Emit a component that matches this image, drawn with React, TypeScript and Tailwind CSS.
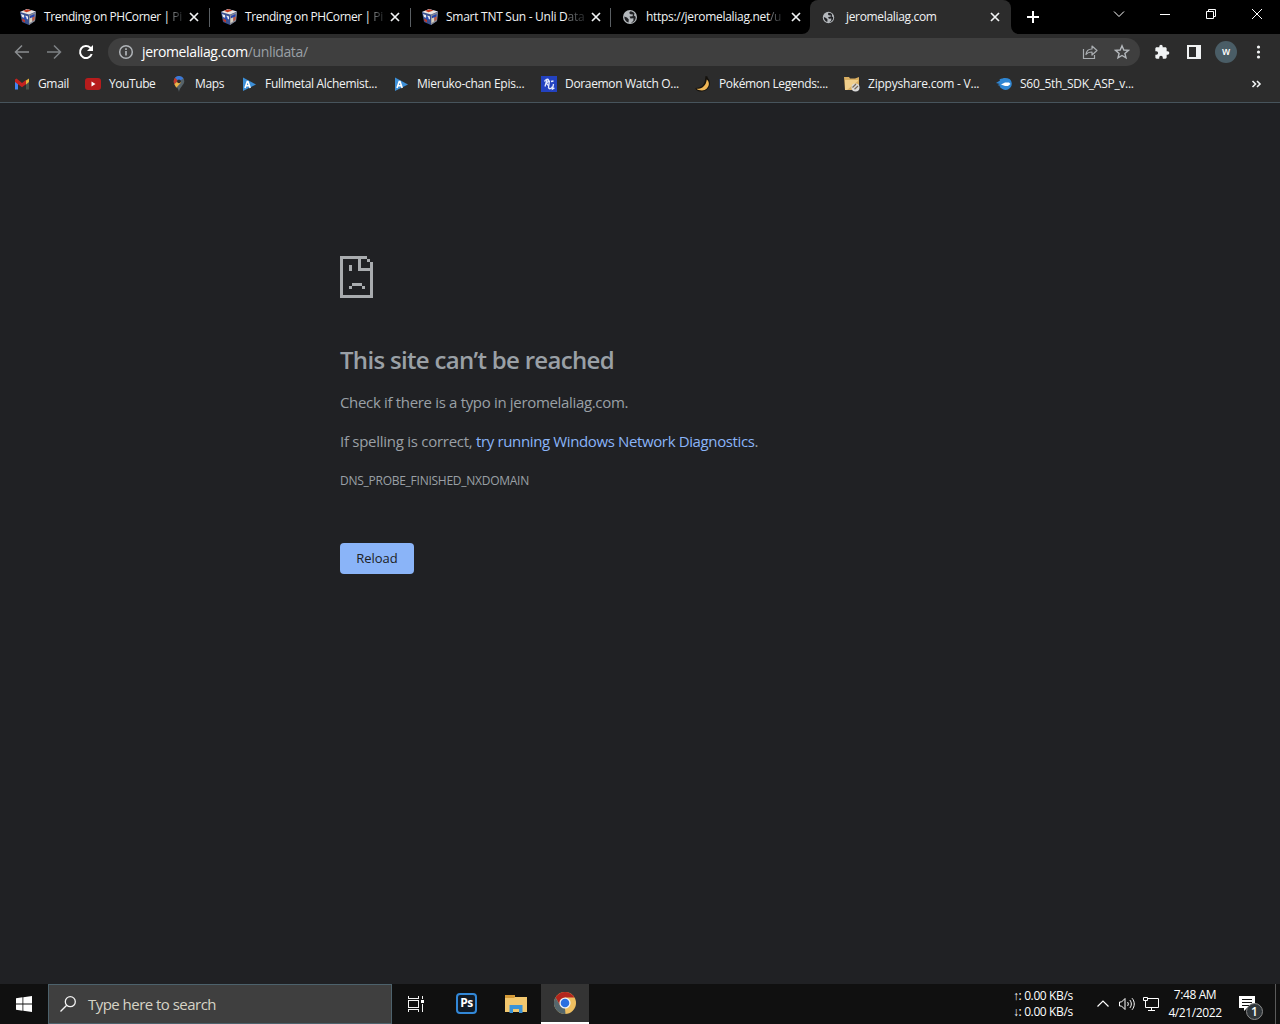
import type { ReactNode } from "react";

const uiFont = "font-['Open_Sans','Noto_Sans',sans-serif]";

function CubeIcon() {
  return (
    <svg className="w-4 h-4 shrink-0" viewBox="0 0 16 16">
      <path d="M0 3 7 0 16 2.500 15 12 9 16 2 13Z" fill="#39508f" />
      <path d="M9 6 16 3 15 12 9 16Z" fill="#8a8b93" />
      <path d="M0 3 7 0 16 2.500 9 5.500Z" fill="#ece6e2" />
      <path d="M3 1.800 7.500 .2 11.500 1.500 6.500 3.300Z" fill="#c43a22" />
      <path d="M1 5 4 6 4.500 9 2 8ZM5.500 6.500 8 7.500 8 10.500 6 9.500Z" fill="#e9eaf2" />
      <path d="M2 9.500 5 11 5 13.500 2.500 12Z" fill="#c0392b" />
      <path d="M4 7.500 6.500 8.500 6.500 11 4.500 10Z" fill="#2347c0" />
      <path d="M10 7 14.500 5 14.500 7.500 10 9.500Z" fill="#2745b0" />
      <path d="M9.500 9.500 12 8.500 12 12.500 9.500 14Z" fill="#d8d2c4" />
      <path d="M12.500 8.500 14.800 7.500 14.300 11 12.500 12Z" fill="#c4513a" />
    </svg>
  );
}

function GlobeIcon({ className }: { className: string }) {
  return (
    <svg className={className} viewBox="0 0 16 16">
      <circle cx="8" cy="8" r="7" fill="#b4b8bc" />
      <path
        d="M8.500 2.300C7 3 7 4.500 8.300 5.300L11 5.500 10.500 7.200 7.500 7.500 8.500 9.500 11.500 9.300 11.300 12 9 13.700 10.500 13.500C12.800 12.500 13.900 10.300 13.700 7.800L12 6.500 12.500 4.500C11.500 3.200 10.200 2.500 8.500 2.300ZM2.300 7.500 5 8.500 6.800 10.500 6.500 13.500C3.800 12.800 2.200 10.300 2.300 7.500Z"
        fill="#202124"
      />
    </svg>
  );
}

function CloseIcon() {
  return (
    <svg className="w-4 h-4" viewBox="0 0 16 16" stroke="#f1f3f4" strokeWidth="1.700">
      <path d="m4 4 8 8M12 4l-8 8" />
    </svg>
  );
}

interface TabProps {
  title: string;
  rest?: string;
  icon: ReactNode;
  active?: boolean;
  divider?: boolean;
  size?: string;
}

function Tab({ title, rest, icon, active, divider, size = "w-[200px] tracking-[-0.27px]" }: TabProps) {
  return (
    <div
      className={`relative flex items-center h-[34px] shrink-0 ${size} ${
        active ? "bg-[#2c2c2c] rounded-t-lg pl-3" : "pl-[11px]"
      }`}
    >
      {icon}
      <div className="ml-2 w-[137px] shrink-0 whitespace-nowrap text-xs text-[#f1f3f4]">
        {title}
        {rest && (
          <span className="bg-gradient-to-r from-[#85888a] to-[#2c2e30] bg-clip-text text-transparent">{rest}</span>
        )}
      </div>
      <div className={active ? "ml-[4px]" : "ml-[5px]"}>
        <CloseIcon />
      </div>
      {divider && <div className="absolute right-0 top-2 h-[19px] w-px bg-[#5a5f63]" />}
      {active && (
        <>
          <svg className="absolute -left-2 bottom-0 w-2 h-2" viewBox="0 0 8 8">
            <path d="M8 0V8H0A8 8 0 0 0 8 0Z" fill="#2c2c2c" />
          </svg>
          <svg className="absolute -right-2 bottom-0 w-2 h-2" viewBox="0 0 8 8">
            <path d="M0 0V8H8A8 8 0 0 1 0 0Z" fill="#2c2c2c" />
          </svg>
        </>
      )}
    </div>
  );
}

function TabStrip() {
  return (
    <div className="flex h-[34px] bg-black pl-[9px]">
      <Tab divider size="w-[201px] tracking-[-0.43px]" title="Trending on PHCorner | " rest="Pi" icon={<CubeIcon />} />
      <Tab divider size="w-[201px] tracking-[-0.43px]" title="Trending on PHCorner | " rest="Pi" icon={<CubeIcon />} />
      <Tab divider title="Smart TNT Sun - Unli D" rest="ata" icon={<CubeIcon />} />
      <Tab
        size="w-[199px] tracking-[-0.3px]"
        title="https://jeromelaliag.net"
        rest="/u"
        icon={<GlobeIcon className="w-4 h-4 shrink-0" />}
      />
      <Tab
        active
        size="w-[201px] tracking-[-0.33px]"
        title="jeromelaliag.com"
        icon={<GlobeIcon className="w-[13px] h-[13px] mr-[3px] shrink-0" />}
      />
      <div className="flex items-center pl-[14px]">
        <svg className="w-4 h-4" viewBox="0 0 16 16" stroke="#fff" strokeWidth="2">
          <path d="M2 8h12M8 2v12" />
        </svg>
      </div>
      <div className="ml-auto flex h-7 text-white">
        {[
          <path d="m3 5.500 5 5 5-5" />,
          <path d="M3 8.500h10" />,
          <path d="M3.500 5.500h7v7h-7zM5.500 5.500v-2h7v7h-2" />,
          <path d="m3 3 10 10M13 3 3 13" />,
        ].map((shape, i) => (
          <div key={i} className="flex w-[46px] items-center justify-center">
            <svg className="w-4 h-4" viewBox="0 0 16 16" fill="none" stroke="currentColor">
              {shape}
            </svg>
          </div>
        ))}
      </div>
    </div>
  );
}

function Toolbar() {
  return (
    <div className="flex h-9 items-center bg-[#2c2c2c] pl-[14px] pr-[14px]">
      <div className="flex gap-4 w-[94px] shrink-0">
        <svg className="w-4 h-4" viewBox="0 0 16 16" fill="none" stroke="#8a8d90" strokeWidth="1.500">
          <path d="M15 8H2M8 1.500 1.500 8 8 14.500" />
        </svg>
        <svg className="w-4 h-4" viewBox="0 0 16 16" fill="none" stroke="#7d8184" strokeWidth="1.500">
          <path d="M1 8h13M8 1.500 14.500 8 8 14.500" />
        </svg>
        <svg className="w-4 h-4" viewBox="0 0 16 16" fill="none" stroke="#fff" strokeWidth="2">
          <path d="M13.700 10A6 6 0 1 1 12.300 3.800L14 5.500" />
          <path d="M15 1v6H9Z" fill="#fff" stroke="none" />
        </svg>
      </div>
      <div className="flex h-7 flex-1 items-center rounded-full bg-[#3f3f3f] pl-[10px] pr-[10px]">
        <svg className="w-4 h-4" viewBox="0 0 16 16" fill="none" stroke="#b0b4b8" strokeWidth="1.500">
          <circle cx="8" cy="8" r="6.300" />
          <path d="M8 7v4.500M8 4.300v1.600" strokeWidth="1.700" />
        </svg>
        <div className="ml-2 text-sm tracking-[-0.38px] text-white">
          jeromelaliag.com<span className="text-[#9aa0a6]">/unlidata/</span>
        </div>
        <div className="ml-auto flex gap-4">
          <svg className="w-4 h-4" viewBox="0 0 16 16" fill="none" stroke="#a9adb1" strokeWidth="1.200">
            <path d="M1.500 5v9.500h11V11" />
            <path d="M4 10.500C4.300 7 6.500 5 10 5V2l5 4.500-5 4.500V8C7.300 8 5.500 8.500 4 10.500Z" strokeLinejoin="round" />
          </svg>
          <svg className="w-4 h-4" viewBox="0 0 16 16" fill="none" stroke="#b4b8bc" strokeWidth="1.400">
            <path d="m8 1.800 1.800 4.200 4.600.4-3.500 3 1.100 4.500L8 11.500l-4 2.400 1.100-4.500-3.500-3L6.200 6Z" />
          </svg>
        </div>
      </div>
      <div className="ml-[14px] flex items-center text-[#f1f3f4]">
        <svg className="w-4 h-4" viewBox="0 0 24 24" fill="currentColor">
          <path d="M20.500 11H19V7c0-1.100-.9-2-2-2h-4V3.500a2.500 2.500 0 0 0-5 0V5H4c-1.100 0-2 .9-2 2v3.800h1.500a2.700 2.700 0 0 1 0 5.400H2V20c0 1.100.9 2 2 2h3.800v-1.500a2.700 2.700 0 0 1 5.400 0V22H17c1.100 0 2-.9 2-2v-4h1.500a2.500 2.500 0 0 0 0-5Z" />
        </svg>
        <svg className="ml-4 w-4 h-4" viewBox="0 0 16 16" fill="none" stroke="currentColor" strokeWidth="2">
          <path d="M2 2h12v12H2z" />
          <path d="M10 2h4v12h-4z" fill="currentColor" stroke="none" />
        </svg>
        <div className="ml-[13px] flex h-[22px] w-[22px] items-center justify-center rounded-full bg-[#4a5d66] pb-px text-[10px] font-semibold text-white">
          w
        </div>
        <svg className="ml-[13px] w-4 h-4" viewBox="0 0 16 16" fill="currentColor">
          <circle cx="8.500" cy="3" r="1.600" />
          <circle cx="8.500" cy="8" r="1.600" />
          <circle cx="8.500" cy="13" r="1.600" />
        </svg>
      </div>
    </div>
  );
}

const gmail = (
  <>
    <path d="M1 4v9.500h3V7Z" fill="#4285f4" />
    <path d="M15 4v9.500h-3V7Z" fill="#48524a" />
    <path d="M12 4.500 15 2.500V6l-3 2.500Z" fill="#e8b53c" />
    <path d="M1 3.500 2.500 2.500 8 7l4-3v4.300L8 11.300 1 6Z" fill="#c5221f" />
  </>
);

const youtube = (
  <>
    <rect x="0" y="2" width="16" height="12" rx="3" fill="#b71c1c" />
    <path d="m6.500 5.500 4 2.500-4 2.500Z" fill="#fff" />
  </>
);

const maps = (
  <>
    <path d="M8 0a5.300 5.300 0 0 1 5.300 5.300C13.300 9 9 10.500 8 16 7 10.500 2.700 9 2.700 5.300A5.300 5.300 0 0 1 8 0Z" fill="#56636a" />
    <path d="M4 1.800A5.300 5.300 0 0 1 12.500 2.500L6.300 6.200Z" fill="#3b78d8" />
    <path d="M4 1.800 7 4.500 3.300 8.200C2.400 6.300 2.400 3.500 4 1.800Z" fill="#c5392b" />
    <path d="M3.300 8.200 8 4l2 2.500-4.700 5.300Z" fill="#edb548" />
    <circle cx="8" cy="5.300" r="1.900" fill="#2c2c2c" />
  </>
);

const anime = (
  <>
    <path d="M2 1.500 15 8.500 2 15Z" fill="#3c8fd8" />
    <path d="m4 12 2.200-6.500h.8L9.200 12M5 9.800h3.500" fill="none" stroke="#fff" strokeWidth="1.600" />
  </>
);

const runic = (
  <>
    <path d="M0 0h16v16H0z" fill="#2342c0" />
    <path
      d="M3.500 5.500C4.500 3 7 2.500 7.500 4S6 7 4.500 7.200M6 3.500 4 10.500M5.500 7.200 7 9.500M8.500 4.500 7.500 11.500C8 13.500 10.500 13 11.500 10.500M10 5.500l2.500-.5M12.500 8l-1 5 2-1"
      fill="none"
      stroke="#e6ecff"
      strokeWidth="1.300"
    />
  </>
);

const banana = (
  <>
    <path d="M10.500 0 12.500 .5 12.800 2C17.500 7 14 15.500 6 15.500 3 15.500.5 14 .5 12 6 12 9.500 9 10 4Z" fill="#15120d" />
    <path d="M11.800 3.500C16.500 7.500 12.500 14.500 7 14.500 4.500 14.500 2.500 14 1.500 12.800 7.500 13 11 9.500 11.800 3.500Z" fill="#efb656" />
  </>
);

const zippy = (
  <>
    <path d="M0 1h5l1 1.500h5L15 1v13H1Z" fill="#d9ae61" />
    <path d="M1 4h13v1L3 14H1Z" fill="#f0cf8c" />
    <circle cx="11.500" cy="11.500" r="4" fill="#dadada" />
    <path d="m8.500 11.500 3.500-3.500M10.500 13.300 14 10" stroke="#7a6a55" strokeWidth="1.200" />
  </>
);

const comet = (
  <>
    <path d="M0 7 4 4.500 3.500 3.500C7 1.500 11 1.500 13.500 3 17 6 16.500 11.500 12 13.500 9 14.500 6 13.500 3.500 10.800L4.500 10 1.500 9 4 8Z" fill="#2f86d3" />
    <path d="M5 8.500 9 6.500h4l1.500 1.500L12 10H9Z" fill="#fff" />
  </>
);

const bookmarks = [
  { label: "Gmail", icon: gmail, size: "w-[71px] tracking-[-0.35px]" },
  { label: "YouTube", icon: youtube, size: "w-[86px] tracking-[-0.42px]" },
  { label: "Maps", icon: maps, size: "w-[70px] tracking-[-0.35px]" },
  { label: "Fullmetal Alchemist...", icon: anime, size: "w-[152px] tracking-[-0.3px]" },
  { label: "Mieruko-chan Epis...", icon: anime, size: "w-[148px] tracking-[-0.27px]" },
  { label: "Doraemon Watch O...", icon: runic, size: "w-[154px] tracking-[-0.33px]" },
  { label: "Pokémon Legends:...", icon: banana, size: "w-[149px] tracking-[-0.36px]" },
  { label: "Zippyshare.com - V...", icon: zippy, size: "w-[152px] tracking-[-0.22px]" },
  { label: "S60_5th_SDK_ASP_v...", icon: comet, size: "w-[150px] tracking-[-0.28px]" },
];

function BookmarksBar() {
  return (
    <div className="flex h-[33px] items-center border-b border-[#47545c] bg-[#2c2c2c] pb-1 pl-[14px] pr-4">
      {bookmarks.map((b) => (
        <div key={b.label} className={`flex items-center gap-2 shrink-0 ${b.size}`}>
          <svg className="w-4 h-4 shrink-0" viewBox="0 0 16 16">
            {b.icon}
          </svg>
          <span className="whitespace-nowrap text-xs text-[#f1f3f4]">{b.label}</span>
        </div>
      ))}
      <svg className="ml-auto w-4 h-4" viewBox="0 0 16 16" fill="none" stroke="#f1f3f4" strokeWidth="1.600">
        <path d="m4.500 5 3 3-3 3M9 5l3 3-3 3" />
      </svg>
    </div>
  );
}

function ErrorPage() {
  return (
    <main className="flex-1 bg-[#202124] pl-[340px] pt-[153px] text-[#9aa0a6]">
      <svg className="w-[33px] h-[42px]" viewBox="0 0 33 42" fill="#a9acaf" shapeRendering="crispEdges">
        <path d="M0 0h27v3H3v36h27V6h3v36H0Z" />
        <path d="M27 3h3v3h-3zM18 3h3v9h9v3H18zM9 9h3v6H9zM12 27h10v3H12zM9 30h3v3H9zM22 30h3v3h-3z" />
      </svg>
      <h1 className="mt-[47px] text-2xl leading-[30px] font-semibold tracking-[-0.69px]">This site can’t be reached</h1>
      <p className="mt-[15px] text-[15px] leading-6 tracking-[-0.33px]">Check if there is a typo in jeromelaliag.com.</p>
      <p className="mt-[15px] text-[15px] leading-6 tracking-[-0.27px]">
        If spelling is correct,{" "}
        <a className="text-[#8ab4f8] tracking-[-0.37px]">try running Windows Network Diagnostics</a>.
      </p>
      <p className="mt-[19px] text-xs leading-[18px] tracking-[-0.26px]">DNS_PROBE_FINISHED_NXDOMAIN</p>
      <button className="mt-[53px] h-[31px] w-[74px] rounded bg-[#8ab4f8] text-[13px] text-[#202124]">Reload</button>
    </main>
  );
}

function Taskbar() {
  return (
    <footer className="flex h-10 items-center bg-[#101010] text-white">
      <div className="flex w-12 shrink-0 justify-center">
        <svg className="w-4 h-4" viewBox="0 0 16 16" fill="#fff">
          <path d="M0 2.200 6.500 1.300V7.500H0ZM7.300 1.200 16 0v7.500H7.300ZM0 8.400h6.500v6.300L0 13.800ZM7.300 8.400H16V16l-8.700-1.200Z" />
        </svg>
      </div>
      <div className="flex h-10 w-[344px] shrink-0 items-center border border-[#4d626c] bg-[#3f3f3f] pl-[11px]">
        <svg className="w-4 h-4" viewBox="0 0 16 16" fill="none" stroke="#f3f3f3" strokeWidth="1.300">
          <circle cx="10.300" cy="5.700" r="5" />
          <path d="M6.700 9.300.5 15.500" />
        </svg>
        <span className="ml-3 text-[15px] tracking-[-0.53px] text-[#d6d3c6]">Type here to search</span>
      </div>
      <div className="flex w-12 justify-center">
        <svg className="w-4 h-4" viewBox="0 0 16 16" fill="none" stroke="#f3f3f3" shapeRendering="crispEdges">
          <path d="M.5 0v2.500h10V0M.5 16v-2.500h10V16M.5 4.500h10v7H.5zM14.500 0v3M14.500 8v8" />
          <path d="M13 4h3v3h-3z" fill="#fff" stroke="none" />
        </svg>
      </div>
      <div className="ml-[3px] flex w-12 justify-center">
        <div className="mb-[2px] mr-px flex h-[21px] w-[21px] items-center justify-center rounded border-2 border-[#3288d8] bg-[#101a26] text-xs font-bold tracking-[-0.5px]">
          Ps
        </div>
      </div>
      <div className="ml-px flex w-12 justify-center">
        <svg className="w-[22px] h-[18px]" viewBox="0 0 22 18">
          <path d="M0 0h8l2 2h12v15H0Z" fill="#f2c76e" />
          <path d="M0 0h10v2L9 3H0Z" fill="#d49a38" />
          <path d="M4.500 10h13v8H14v-4H8v4H4.500Z" fill="#3a93d8" />
        </svg>
      </div>
      <div className="ml-px flex h-10 w-12 items-center justify-center border-b-2 border-white bg-[#343434]">
        <svg className="w-[22px] h-[22px]" viewBox="0 0 22 22">
          <circle cx="11" cy="11" r="11" fill="#efbf60" />
          <path d="M1.500 5.500A11 11 0 0 1 20.500 5.500H11L6.200 13.700Z" fill="#b3261e" />
          <path d="M1.500 5.500 6.300 13.700 11 16.500 11.500 22A11 11 0 0 1 1.500 5.500Z" fill="#55666c" />
          <circle cx="11" cy="11" r="5.600" fill="#f3f3f3" />
          <circle cx="11" cy="11" r="4.300" fill="#2b6fe0" />
        </svg>
      </div>
      <div className="ml-auto w-[61px] whitespace-nowrap text-xs leading-4 tracking-[-0.38px]">
        <div>↑: 0.00 KB/s</div>
        <div>↓: 0.00 KB/s</div>
      </div>
      <div className="ml-[21px] flex items-center gap-2">
        <svg className="w-4 h-4" viewBox="0 0 16 16" fill="none" stroke="#fff" strokeWidth="1.200">
          <path d="M2.500 10.500 8 5l5.500 5.500" />
        </svg>
        <svg className="w-4 h-4" viewBox="0 0 16 16" fill="none" stroke="#fff">
          <path d="M.5 6h2L6 2.500v11L2.500 10h-2ZM8.500 6c1 1 1 3 0 4M10.800 4c2 2.300 2 5.700 0 8M13 2.200c3 3.300 3 8.300 0 11.600" />
        </svg>
        <svg className="w-4 h-4" viewBox="0 0 16 16" fill="none" stroke="#fff">
          <path d="M5 2.500h10.500v9H2.500V6M8.500 11.500v3M5 14.500h7M.5 1.500h4v3h-4zM2.500 4.500V7" />
        </svg>
      </div>
      <div className="ml-[8px] w-[56px] text-center text-xs leading-[18px] tracking-[-0.4px]">
        <div>7:48 AM</div>
        <div>4/21/2022</div>
      </div>
      <div className="relative ml-4 mr-[12px] h-6 w-6">
        <svg className="w-6 h-6" viewBox="0 0 24 24">
          <path d="M0 4h16v12H8l-3 3v-3H0Z" fill="#fff" />
          <path d="M3 7.500h10M3 10.500h10M3 13.500h7" stroke="#101010" />
        </svg>
        <div className="absolute left-[7px] top-[11px] flex h-[17px] w-[17px] items-center justify-center rounded-full border border-[#8b8b8b] bg-[#30363a] text-xs font-semibold">
          1
        </div>
      </div>
      <div className="h-10 w-px mr-[4px] bg-[#5a5a5a]" />
    </footer>
  );
}

export default function App() {
  return (
    <div className={`flex h-[1024px] w-[1280px] flex-col overflow-hidden ${uiFont}`}>
      <TabStrip />
      <Toolbar />
      <BookmarksBar />
      <ErrorPage />
      <Taskbar />
    </div>
  );
}
